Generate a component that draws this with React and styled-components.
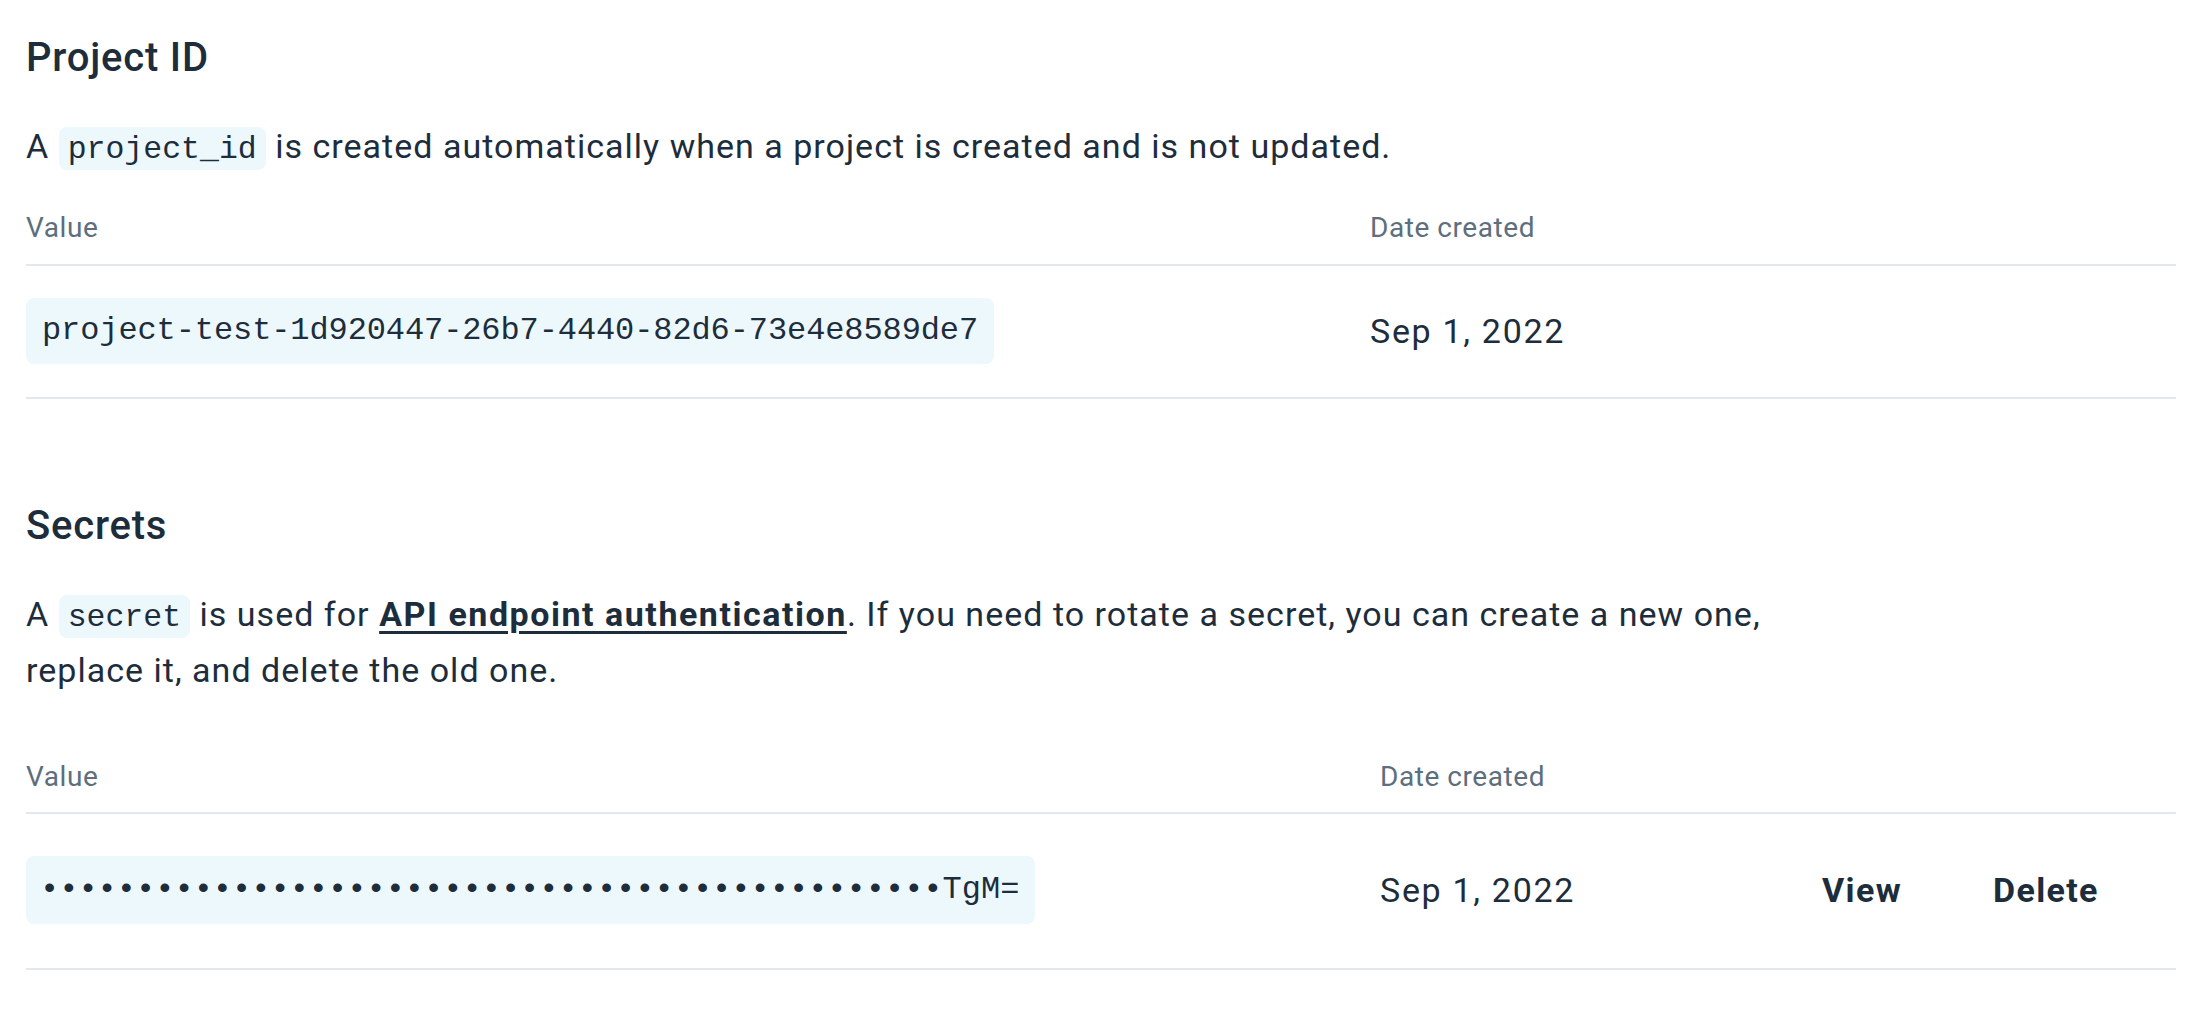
import React from "react";
import styled, { createGlobalStyle } from "styled-components";

const GlobalStyle = createGlobalStyle`
  html, body {
    margin: 0;
    padding: 0;
    background: #ffffff;
  }
  body {
    font-family: Roboto, "Liberation Sans", Arial, sans-serif;
    color: #1d2d3b;
    -webkit-font-smoothing: antialiased;
  }
`;

const Page = styled.main`
  padding: 34px 28px 0 26px;
`;

const Section = styled.section`
  display: flex;
  flex-direction: column;
  margin-top: ${(p) => p.$top || 0}px;
`;

const Heading = styled.h2`
  margin: 0;
  font-size: 40px;
  line-height: 48px;
  font-weight: 500;
  letter-spacing: 0.02em;
  color: #1d2d3b;
`;

const Paragraph = styled.p`
  margin: 36px 0 0;
  font-size: 34px;
  line-height: 56px;
  letter-spacing: 0.03em;
  color: #1d2d3b;
`;

const InlineCode = styled.code`
  font-family: "Liberation Mono", "DejaVu Sans Mono", monospace;
  font-size: 31.5px;
  line-height: 1;
  letter-spacing: 0;
  background: #edf8fd;
  border-radius: 8px;
  padding: 5px 9px 3px;
`;

const Link = styled.a`
  color: #1d2d3b;
  font-weight: 700;
  letter-spacing: 0.045em;
  text-decoration: underline;
  text-decoration-thickness: 3px;
  text-underline-offset: 5px;
`;

const Table = styled.div`
  margin-top: ${(p) => p.$top}px;
  display: flex;
  flex-direction: column;
`;

const HeaderRow = styled.div`
  display: grid;
  grid-template-columns: ${(p) => p.$cols};
  padding-bottom: 17.6px;
  border-bottom: 2px solid #e3e8ec;
`;

const HeaderCell = styled.div`
  font-size: 28px;
  line-height: 36px;
  letter-spacing: 0.02em;
  color: #5d6e7c;
`;

const Row = styled.div`
  display: grid;
  grid-template-columns: ${(p) => p.$cols};
  align-items: center;
  padding: ${(p) => p.$padTop}px 0 ${(p) => p.$padBottom}px;
  border-bottom: 2px solid #e3e8ec;
`;

const CodeValue = styled.div`
  justify-self: start;
  font-family: "Liberation Mono", "DejaVu Sans Mono", monospace;
  font-size: 32px;
  letter-spacing: ${(p) => p.$spacing}px;
  line-height: ${(p) => p.$lh}px;
  padding: 15px 16px 15px ${(p) => p.$padLeft}px;
  background: #edf8fd;
  border-radius: 8px;
  color: #1d2d3b;
  white-space: nowrap;
`;

const DateCell = styled.div`
  font-size: 34px;
  line-height: 44px;
  letter-spacing: 0.05em;
  color: #1d2d3b;
`;

const ActionButton = styled.button`
  justify-self: start;
  border: 0;
  background: none;
  padding: 0;
  margin: 0;
  font-family: Roboto, "Liberation Sans", Arial, sans-serif;
  font-size: 34px;
  line-height: 44px;
  font-weight: 700;
  letter-spacing: 0.04em;
  color: #1d2d3b;
  cursor: pointer;
`;

const COLS_ID = "1344px 1fr";
const COLS_SECRET = "1354px 442px 171px 1fr";

export default function App() {
  return (
    <>
      <GlobalStyle />
      <Page>
        <Section>
          <Heading>Project ID</Heading>
          <Paragraph>
            A <InlineCode>project_id</InlineCode> is created automatically when
            a project is created and is not updated.
          </Paragraph>
          <Table $top={36}>
            <HeaderRow $cols={COLS_ID}>
              <HeaderCell>Value</HeaderCell>
              <HeaderCell>Date created</HeaderCell>
            </HeaderRow>
            <Row $cols={COLS_ID} $padTop={32} $padBottom={33}>
              <CodeValue $spacing={-0.1} $lh={36} $padLeft={16}>
                project-test-1d920447-26b7-4440-82d6-73e4e8589de7
              </CodeValue>
              <DateCell>Sep 1, 2022</DateCell>
            </Row>
          </Table>
        </Section>

        <Section $top={103}>
          <Heading>Secrets</Heading>
          <Paragraph>
            A <InlineCode>secret</InlineCode> is used for{" "}
            <Link href="#">API endpoint authentication</Link>. If you need to
            rotate a secret, you can create a new one,
            <br />
            replace it, and delete the old one.
          </Paragraph>
          <Table $top={61}>
            <HeaderRow $cols={COLS_SECRET}>
              <HeaderCell>Value</HeaderCell>
              <HeaderCell>Date created</HeaderCell>
              <HeaderCell />
              <HeaderCell />
            </HeaderRow>
            <Row $cols={COLS_SECRET} $padTop={42} $padBottom={44}>
              <CodeValue $spacing={0} $lh={38} $padLeft={14}>
                {"•".repeat(47)}TgM=
              </CodeValue>
              <DateCell>Sep 1, 2022</DateCell>
              <ActionButton type="button">View</ActionButton>
              <ActionButton type="button">Delete</ActionButton>
            </Row>
          </Table>
        </Section>
      </Page>
    </>
  );
}
